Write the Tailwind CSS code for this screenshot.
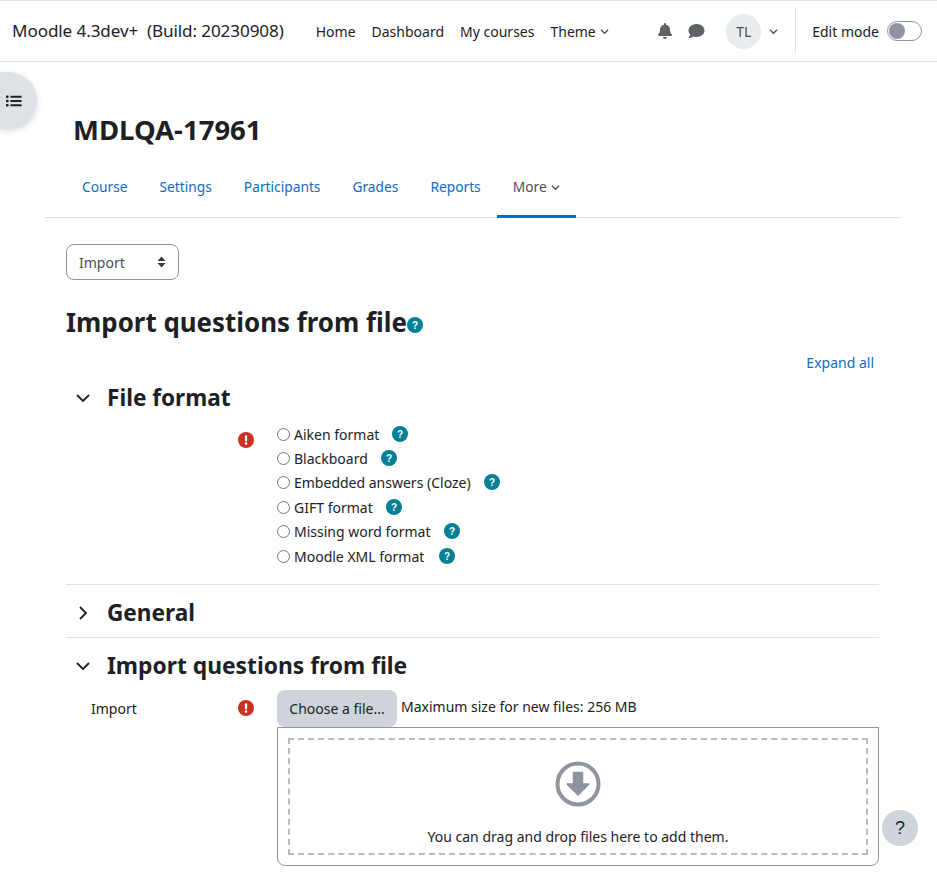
<!DOCTYPE html>
<html lang="en">
<head>
    <meta charset="UTF-8">
    <meta name="viewport" content="width=device-width, initial-scale=1.0">
    <script src="https://cdn.jsdelivr.net/npm/@tailwindcss/browser@4"></script>
    <title>Import questions from file</title>
</head>
<body class="bg-white text-[#1d2125] font-['Noto_Sans','Open_Sans',sans-serif] text-[14px] h-[875px] overflow-hidden relative">
    <!-- top nav -->
    <nav class="h-[62px] border-t border-b border-[#dee2e6] flex items-center pl-[12px] pr-[15px] text-[14px]">
        <span class="text-[17.1px] tracking-[-0.1px] whitespace-pre">Moodle 4.3dev+  (Build: 20230908)</span>
        <div class="flex items-center gap-[16px] ml-[32px]">
            <a>Home</a>
            <a>Dashboard</a>
            <a>My courses</a>
            <a class="flex items-center gap-[4px]">Theme
                <svg class="w-[9px] h-[9px]" viewBox="0 0 10 10" fill="none" stroke="#495057" stroke-width="1.4"><path d="M1 3l4 4 4-4"/></svg>
            </a>
        </div>
        <div class="ml-auto flex items-center h-[44px]">
            <svg class="w-[16px] h-[16px] mr-[15px]" viewBox="0 0 448 512" fill="#5f6368"><path d="M224 512c35 0 64-29 64-64H160c0 35 29 64 64 64zm215-150c-19-21-55-52-55-154 0-78-54-140-128-155V32a32 32 0 1 0-64 0v21C118 68 64 130 64 208c0 102-36 133-55 154-6 6-9 14-9 22 0 16 13 32 32 32h384c19 0 32-16 32-32 0-8-3-16-9-22z"/></svg>
            <svg class="w-[17px] h-[16px] mr-[21px]" viewBox="0 0 512 512" fill="#5f6368"><path d="M256 32C115 32 0 125 0 240c0 50 22 95 58 131-13 50-54 94-55 95-3 3-4 7-2 11s5 3 9 3c67 0 117-32 143-52 32 12 67 20 103 20 141 0 256-93 256-208S397 32 256 32z"/></svg>
            <div class="w-[35px] h-[35px] rounded-full bg-[#e9ecef] flex items-center justify-center text-[#495057] text-[14px]">TL</div>
            <svg class="w-[9px] h-[9px] ml-[8px] mr-[17px]" viewBox="0 0 10 10" fill="none" stroke="#495057" stroke-width="1.4"><path d="M1 3l4 4 4-4"/></svg>
            <div class="w-px h-[44px] bg-[#dee2e6] mr-[16px]"></div>
            <span class="mr-[8px]">Edit mode</span>
            <div class="w-[35px] h-[20px] rounded-full border border-[#8f959e] relative">
                <div class="absolute left-[1px] top-[1px] w-[16px] h-[16px] rounded-full bg-[#8f959e]"></div>
            </div>
        </div>
    </nav>

    <!-- drawer toggle -->
    <div class="absolute left-0 top-[72px] w-[37px] h-[57px] bg-[#dee2e6] rounded-r-full shadow-[0_2px_6px_rgba(0,0,0,0.15)] flex items-center pl-[6px]">
        <svg class="w-[16px] h-[14px]" viewBox="0 0 16 14" fill="#1d2125"><rect x="0" y="1.5" width="2.6" height="2.4" rx=".6"/><rect x="0" y="5.8" width="2.6" height="2.4" rx=".6"/><rect x="0" y="10.1" width="2.6" height="2.4" rx=".6"/><rect x="4.4" y="1.7" width="11.2" height="2" rx=".4"/><rect x="4.4" y="6" width="11.2" height="2" rx=".4"/><rect x="4.4" y="10.3" width="11.2" height="2" rx=".4"/></svg>
    </div>

    <!-- page header -->
    <h1 class="ml-[73px] mt-[49px] font-bold text-[27.5px] leading-[38px]">MDLQA-17961</h1>

    <!-- tabs -->
    <div class="ml-[44px] w-[857px] pl-[22px] mt-[7px] h-[62px] border-b border-[#dee2e6] flex text-[#0f6cbf] text-[13.75px]">
        <a class="px-[16px] h-[62px] flex items-center">Course</a>
        <a class="px-[16px] h-[62px] flex items-center">Settings</a>
        <a class="px-[16px] h-[62px] flex items-center">Participants</a>
        <a class="px-[16px] h-[62px] flex items-center">Grades</a>
        <a class="px-[16px] h-[62px] flex items-center">Reports</a>
        <a class="px-[16px] h-[62px] flex items-center gap-[4px] text-[#495057] border-b-[3px] border-[#0f6cbf] pt-[3px]">More
            <svg class="w-[9px] h-[9px]" viewBox="0 0 10 10" fill="none" stroke="#495057" stroke-width="1.4"><path d="M1 3l4 4 4-4"/></svg>
        </a>
    </div>

    <main class="ml-[66px] w-[813px]">
        <div class="mt-[26px] w-[113px] h-[36px] border border-[#8f959e] rounded-[8px] flex items-center justify-between pl-[12px] pr-[12px] text-[#495057]">
            Import
            <svg class="w-[9px] h-[12px]" viewBox="0 0 9 12" fill="#343a40"><path d="M4.5 0.5L8.5 5H.5zM4.5 11.5L.5 7h8z"/></svg>
        </div>

        <h2 class="mt-[23px] flex items-center font-bold text-[25.9px] leading-[38px]">Import questions from file
            <span class="mt-[5px]"><svg class="w-[16px] h-[16px]" viewBox="0 0 16 16"><circle cx="8" cy="8" r="8" fill="#008196"/><text x="8" y="11.5" text-anchor="middle" font-size="10" font-weight="700" fill="#fff" font-family="Liberation Sans">?</text></svg></span>
        </h2>

        <div class="mt-[12px] text-right pr-[5px] text-[#0f6cbf] leading-[20px]">Expand all</div>

        <!-- file format -->
        <section class="mt-[10px] pb-[16px] border-b border-[#dee2e6]">
            <div class="flex items-center h-[30px]">
                <svg class="w-[14px] h-[14px] ml-[10px]" viewBox="0 0 14 14" fill="none" stroke="#1d2125" stroke-width="1.8"><path d="M1 4l6 6 6-6"/></svg>
                <h3 class="ml-[17px] font-bold text-[22.6px]">File format</h3>
            </div>
            <div class="flex mt-[9px]">
                <div class="w-[188px] pt-[10px] flex justify-end">
                    <svg class="w-[16px] h-[16px]" viewBox="0 0 16 16"><circle cx="8" cy="8" r="8" fill="#ca3120"/><rect x="6.9" y="3.2" width="2.2" height="6.2" rx="1" fill="#fff"/><circle cx="8" cy="11.6" r="1.3" fill="#fff"/></svg>
                </div>
                <div class="ml-[23px] flex flex-col">
                    <label class="flex items-center h-[24.4px]"><span class="w-[13px] h-[13px] rounded-full border border-[#767676] mr-[4px]"></span>Aiken format<svg class="w-[16px] h-[16px] ml-[13px] -mt-[1px]" viewBox="0 0 16 16"><circle cx="8" cy="8" r="8" fill="#008196"/><text x="8" y="11.5" text-anchor="middle" font-size="10" font-weight="700" fill="#fff" font-family="Liberation Sans">?</text></svg></label>
                    <label class="flex items-center h-[24.4px]"><span class="w-[13px] h-[13px] rounded-full border border-[#767676] mr-[4px]"></span>Blackboard<svg class="w-[16px] h-[16px] ml-[13px] -mt-[1px]" viewBox="0 0 16 16"><circle cx="8" cy="8" r="8" fill="#008196"/><text x="8" y="11.5" text-anchor="middle" font-size="10" font-weight="700" fill="#fff" font-family="Liberation Sans">?</text></svg></label>
                    <label class="flex items-center h-[24.4px]"><span class="w-[13px] h-[13px] rounded-full border border-[#767676] mr-[4px]"></span>Embedded answers (Cloze)<svg class="w-[16px] h-[16px] ml-[13px] -mt-[1px]" viewBox="0 0 16 16"><circle cx="8" cy="8" r="8" fill="#008196"/><text x="8" y="11.5" text-anchor="middle" font-size="10" font-weight="700" fill="#fff" font-family="Liberation Sans">?</text></svg></label>
                    <label class="flex items-center h-[24.4px]"><span class="w-[13px] h-[13px] rounded-full border border-[#767676] mr-[4px]"></span>GIFT format<svg class="w-[16px] h-[16px] ml-[13px] -mt-[1px]" viewBox="0 0 16 16"><circle cx="8" cy="8" r="8" fill="#008196"/><text x="8" y="11.5" text-anchor="middle" font-size="10" font-weight="700" fill="#fff" font-family="Liberation Sans">?</text></svg></label>
                    <label class="flex items-center h-[24.4px]"><span class="w-[13px] h-[13px] rounded-full border border-[#767676] mr-[4px]"></span>Missing word format<svg class="w-[16px] h-[16px] ml-[13px] -mt-[1px]" viewBox="0 0 16 16"><circle cx="8" cy="8" r="8" fill="#008196"/><text x="8" y="11.5" text-anchor="middle" font-size="10" font-weight="700" fill="#fff" font-family="Liberation Sans">?</text></svg></label>
                    <label class="flex items-center h-[24.4px]"><span class="w-[13px] h-[13px] rounded-full border border-[#767676] mr-[4px]"></span>Moodle XML format<svg class="w-[16px] h-[16px] ml-[15px] -mt-[1px]" viewBox="0 0 16 16"><circle cx="8" cy="8" r="8" fill="#008196"/><text x="8" y="11.5" text-anchor="middle" font-size="10" font-weight="700" fill="#fff" font-family="Liberation Sans">?</text></svg></label>
                </div>
            </div>
        </section>

        <!-- general -->
        <section class="h-[53px] pt-[4px] border-b border-[#dee2e6] flex items-center">
            <svg class="w-[14px] h-[14px] ml-[10px]" viewBox="0 0 14 14" fill="none" stroke="#1d2125" stroke-width="1.8"><path d="M4 1l6 6-6 6"/></svg>
            <h3 class="ml-[17px] font-bold text-[22.6px]">General</h3>
        </section>

        <!-- import -->
        <section>
            <div class="flex items-center h-[52px] pt-[4px]">
                <svg class="w-[14px] h-[14px] ml-[10px]" viewBox="0 0 14 14" fill="none" stroke="#1d2125" stroke-width="1.8"><path d="M1 4l6 6 6-6"/></svg>
                <h3 class="ml-[17px] font-bold text-[22.8px]">Import questions from file</h3>
            </div>
            <div class="flex">
                <div class="w-[188px] flex pl-[25px] pt-[8px] justify-between">
                    <span class="text-[#1d2125]">Import</span>
                    <svg class="w-[16px] h-[16px] mt-[2px]" viewBox="0 0 16 16"><circle cx="8" cy="8" r="8" fill="#ca3120"/><rect x="6.9" y="3.2" width="2.2" height="6.2" rx="1" fill="#fff"/><circle cx="8" cy="11.6" r="1.3" fill="#fff"/></svg>
                </div>
                <div class="ml-[23px] flex-1">
                    <div class="flex items-start">
                        <div class="w-[120px] h-[37px] rounded-[8px] bg-[#ced4da] flex items-center justify-center">Choose a file...</div>
                        <span class="ml-[4px] mt-[6px]">Maximum size for new files: 256 MB</span>
                    </div>
                    <div class="h-[139px] border border-[#8f959e] rounded-b-[8px] p-[10px]">
                        <div class="h-full border-2 border-dashed border-[#bbbbbb] flex flex-col items-center">
                            <svg class="w-[46px] h-[46px] mt-[21px]" viewBox="0 0 46 46"><circle cx="23" cy="23" r="20.5" fill="none" stroke="#8f959e" stroke-width="4"/><path d="M18.500 11.500h9v11.500h6.500L23 34 12 23h6.500z" fill="#8f959e" stroke="#8f959e" stroke-linejoin="round" stroke-width="1.5"/></svg>
                            <span class="mt-[19px]">You can drag and drop files here to add them.</span>
                        </div>
                    </div>
                </div>
            </div>
        </section>
    </main>

    <!-- help -->
    <div class="absolute left-[882px] top-[810px] w-[36px] h-[36px] rounded-full bg-[#ced4da] flex items-center justify-center text-[#1d2125] text-[18px] font-['Liberation_Sans']">?</div>
</body>
</html>
